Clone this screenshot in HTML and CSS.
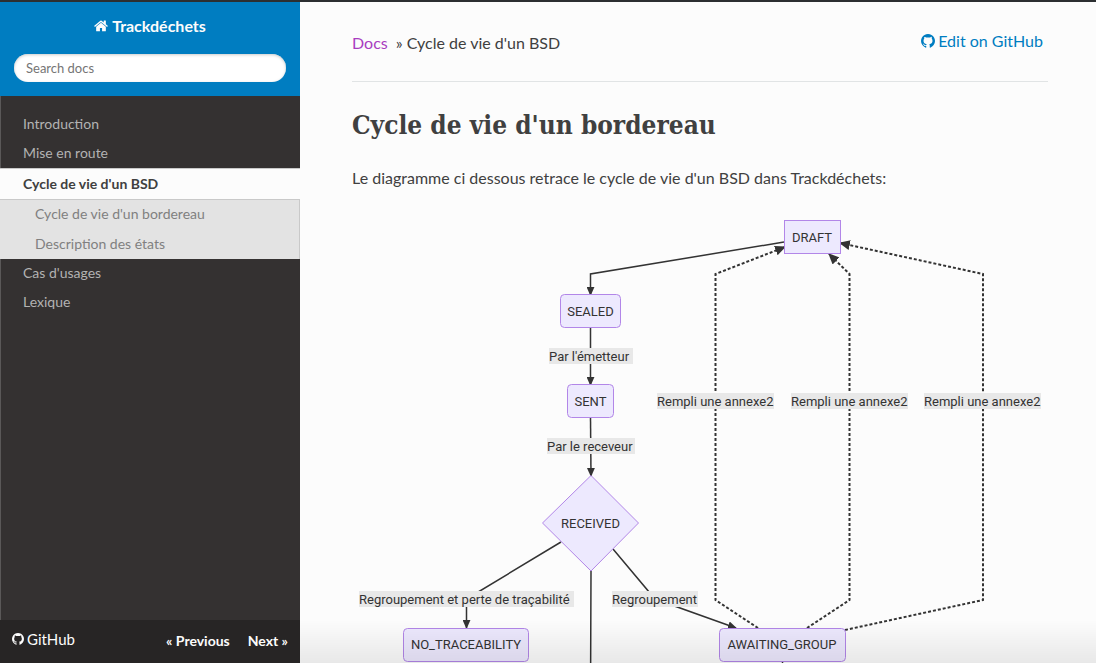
FILE: index.html
```
<!DOCTYPE html>
<html lang="fr">
<head>
<meta charset="utf-8">
<meta name="viewport" content="width=device-width, initial-scale=1">
<title>Cycle de vie d'un BSD - Trackdéchets</title>
<link rel="stylesheet" href="styles.css">
</head>
<body>
<svg class="defs" aria-hidden="true">
  <symbol id="github" viewBox="0 128 1536 1536"><path d="M768 128q209 0 385.500 103t279.500 279.500 103 385.500q0 251-146.500 451.500t-378.500 277.500q-27 5-40-7t-13-30q0-3 .5-76.500t.5-134.500q0-97-52-142 57-6 102.500-18t94-39 81-66.500 53-105 20.500-150.500q0-119-79-206 37-91-8-204-28-9-81 11t-92 44l-38 24q-93-26-192-26t-192 26q-16-11-42.500-27t-83.500-38.500-85-13.500q-45 113-8 204-79 87-79 206 0 85 20.500 150t52.500 105 80.500 67 94 39 102.500 18q-39 36-49 103-21 10-45 15t-57 5-65.500-21.500-55.500-62.500q-19-32-48.500-52t-49.500-24l-20-3q-21 0-29 4.500t-5 11.500 9 14 13 12l7 5q22 10 43.500 38t31.500 51l10 23q13 38 44 61.500t67 30 69.500 7 55.500-3.500l23-4q0 38 .5 88.500t.5 54.500q0 18-13 30t-40 7q-232-77-378.500-277.500t-146.500-451.500q0-209 103-385.500t279.500-279.500 385.500-103z"/></symbol>
  <symbol id="home" viewBox="64 200 1664 1400"><path d="M1472 992v480q0 26-19 45t-45 19h-384v-384h-256v384h-384q-26 0-45-19t-19-45v-480q0-1 .5-3t.5-3l575-474 575 474q1 2 1 6zm223-69l-62 74q-8 9-21 11h-3q-13 0-21-7l-692-577-692 577q-12 8-24 7-13-2-21-11l-62-74q-8-10-7-23.500t11-21.500l719-599q32-26 76-26t76 26l244 204v-195q0-14 9-23t23-9h192q14 0 23 9t9 23v408l219 182q10 8 11 21.500t-7 23.500z"/></symbol>
</svg>
<div class="page">
  <aside class="sidebar">
    <div class="brand">
      <a class="brand-link" href="#"><svg class="icon"><use href="#home"/></svg>Trackdéchets</a>
      <form role="search"><input class="search" type="text" placeholder="Search docs" aria-label="Search docs"></form>
    </div>
    <nav class="menu" aria-label="Documentation">
      <a class="item" href="#">Introduction</a>
      <a class="item" href="#">Mise en route</a>
      <a class="item current" href="#" aria-current="page">Cycle de vie d'un BSD</a>
      <div class="submenu">
        <a class="subitem" href="#">Cycle de vie d'un bordereau</a>
        <a class="subitem" href="#">Description des états</a>
      </div>
      <a class="item" href="#">Cas d'usages</a>
      <a class="item" href="#">Lexique</a>
    </nav>
    <footer class="versions">
      <a class="repo" href="#"><svg class="icon"><use href="#github"/></svg>GitHub</a>
      <a class="step" href="#">« Previous</a>
      <a class="step" href="#">Next »</a>
    </footer>
  </aside>
  <main class="content">
    <header class="crumbs">
      <div class="trail"><a class="docs" href="#">Docs</a><span>» Cycle de vie d'un BSD</span></div>
      <a class="edit" href="#"><svg class="icon"><use href="#github"/></svg>Edit on GitHub</a>
    </header>
    <h1 class="title">Cycle de vie d'un bordereau</h1>
    <p class="intro">Le diagramme ci dessous retrace le cycle de vie d'un BSD dans Trackdéchets:</p>
    <svg class="diagram" viewBox="352 216 696 484" role="img" aria-label="Diagramme du cycle de vie">
      <defs>
        <marker id="arrow" viewBox="0 0 10 10" refX="9" refY="5" markerWidth="9" markerHeight="8" markerUnits="userSpaceOnUse" preserveAspectRatio="none" orient="auto"><path class="head" d="M0 0 10 5 0 10z"/></marker>
        <marker id="arrow-wide" viewBox="0 0 10 10" refX="9" refY="5" markerWidth="11" markerHeight="10" markerUnits="userSpaceOnUse" preserveAspectRatio="none" orient="auto"><path class="head" d="M0 0 10 5 0 10z"/></marker>
      </defs>
      <g class="edge">
        <path marker-end="url(#arrow)" d="M784 242 590.500 274V295"/>
        <path marker-end="url(#arrow)" d="M590.500 328V385"/>
        <path marker-end="url(#arrow)" d="M590.500 418 591 476"/>
        <path marker-end="url(#arrow)" d="M561 542 466.500 599V628"/>
        <path marker-end="url(#arrow)" d="M613 549 655 599 736 628"/>
        <path d="M591 571 590.500 700M782.500 661V700"/>
      </g>
      <g class="edge dotted">
        <path marker-end="url(#arrow-wide)" d="M758 628 715.500 600V274L785 247"/>
        <path marker-end="url(#arrow-wide)" d="M807 628 849.500 600V274L829 254"/>
        <path marker-end="url(#arrow-wide)" d="M845 630 983 600V274L840 243"/>
      </g>
      <g class="node">
        <rect x="784.500" y="220.500" width="56" height="33"/><text x="812" y="242">DRAFT</text>
        <rect x="560.500" y="294.500" width="60" height="33" rx="4"/><text x="590.500" y="316">SEALED</text>
        <rect x="567.500" y="384.500" width="46" height="33" rx="4"/><text x="590.500" y="406">SENT</text>
        <path d="M591 475.500 638.500 523 591 571 542.500 523z"/><text x="590.500" y="528">RECEIVED</text>
        <rect x="403.500" y="628.500" width="125" height="33" rx="4"/><text x="466" y="649">NO_TRACEABILITY</text>
        <rect x="719.500" y="628.500" width="126" height="33" rx="4"/><text x="782" y="649">AWAITING_GROUP</text>
      </g>
      <g class="label">
        <svg x="549" y="348" width="84" height="16"><rect width="100%" height="100%"/><text y="13">Par l'émetteur</text></svg>
        <svg x="547" y="438" width="88" height="16"><rect width="100%" height="100%"/><text y="13">Par le receveur</text></svg>
        <svg x="657" y="393" width="117" height="16"><rect width="100%" height="100%"/><text y="13">Rempli une annexe2</text></svg>
        <svg x="791" y="393" width="117" height="16"><rect width="100%" height="100%"/><text y="13">Rempli une annexe2</text></svg>
        <svg x="924" y="393" width="117" height="16"><rect width="100%" height="100%"/><text y="13">Rempli une annexe2</text></svg>
        <svg x="359" y="591" width="215" height="16"><rect width="100%" height="100%"/><text y="13">Regroupement et perte de traçabilité</text></svg>
        <svg x="612" y="591" width="86" height="16"><rect width="100%" height="100%"/><text y="13">Regroupement</text></svg>
      </g>
    </svg>
  </main>
</div>
</body>
</html>
```

FILE: styles.css
```
* { box-sizing: border-box; }
body {
  margin: 0;
  background: #fcfcfc;
  color: #404040;
  font: 16px/24px Lato, sans-serif;
}
a { color: #2980b9; text-decoration: none; }
.defs { display: none; }
.icon { width: 14px; height: 14px; fill: currentColor; }
.page {
  display: flex;
  height: 100vh;
  overflow: hidden;
  border-top: 2px solid #2c2f31;
}
.sidebar {
  display: flex;
  flex-direction: column;
  flex: 0 0 300px;
  background: #343131;
  box-shadow: inset 1px 0 #5a5858;
}
.brand {
  display: flex;
  flex-direction: column;
  gap: 16px;
  padding: 12px 14px 14px;
  background: #007dc1;
}
.brand-link {
  display: flex;
  justify-content: center;
  align-items: center;
  gap: 4px;
  color: #fcfcfc;
  font-weight: 700;
}
.search {
  display: block;
  width: 100%;
  height: 28px;
  padding: 0 12px;
  border: 0;
  border-radius: 14px;
  background: #fff;
  box-shadow: inset 0 1px 3px #ccc;
  font: 13px Lato, sans-serif;
}
.search::placeholder { color: #757575; }
.menu {
  display: flex;
  flex-direction: column;
  flex: 1;
  padding-top: 14px;
  font-size: 14px;
}
.item { padding: 0 23px 2px; line-height: 27px; color: #b3b3b3; }
.current {
  padding-bottom: 0;
  line-height: 30px;
  background: #fcfcfc;
  border-top: 1px solid #c9c9c9;
  color: #404040;
  font-weight: 700;
}
.submenu {
  display: flex;
  flex-direction: column;
  background: #e3e3e3;
  box-shadow: inset -1px 1px #c9c9c9;
}
.subitem { padding: 0 35px; line-height: 30px; color: #808080; }
.versions {
  display: flex;
  align-items: center;
  gap: 18px;
  height: 43px;
  padding: 0 12px 2px;
  background: #272525;
  font-size: 14px;
}
.versions a { color: #fcfcfc; }
.versions .step { font-weight: 700; }
.repo {
  display: flex;
  align-items: center;
  gap: 3px;
  flex: 1;
  padding-bottom: 4px;
  font-size: 15px;
}
.repo .icon { width: 12px; height: 12px; }
.content {
  flex: 1;
  min-width: 0;
  padding: 0 48px 0 52px;
}
.content::after {
  content: "";
  position: fixed;
  inset: auto 0 0 300px;
  height: 43px;
  background: linear-gradient(transparent, rgba(0, 0, 0, .08));
}
.crumbs {
  display: flex;
  justify-content: space-between;
  align-items: flex-start;
  height: 80px;
  padding: 27px 5px 0 0;
  border-bottom: 1px solid #e1e4e5;
}
.trail { display: flex; gap: 8px; padding-top: 2px; }
.docs { color: #a83cc0; }
.edit { display: flex; align-items: center; gap: 3px; color: #007dc1; }
.title {
  margin: 24px 0 22px;
  font: 700 26px/38px "Roboto Slab", "DejaVu Serif Condensed", "DejaVu Serif", serif;
}
.intro { margin: 0 0 26px; }
.diagram { display: block; width: 100%; }
.edge { fill: none; stroke: #333; stroke-width: 1.5px; }
.dotted { stroke-width: 2px; stroke-dasharray: 3 2; }
.head { fill: #333; stroke: none; }
.node rect, .node path { fill: #ede9fe; stroke: #b286e8; }
.diagram text { fill: #333; font: 13px "Trebuchet MS", Roboto, sans-serif; }
.node text { text-anchor: middle; }
.label rect { fill: #e8e8e8; }
```
